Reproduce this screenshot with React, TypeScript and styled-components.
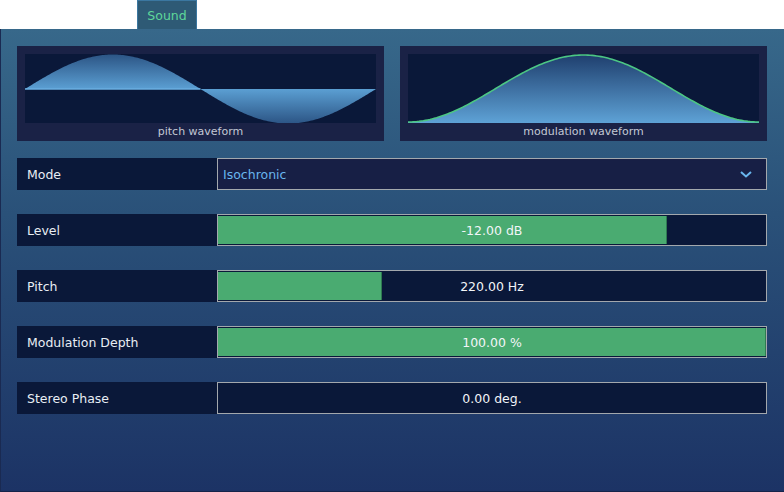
import React from 'react';
import styled, { createGlobalStyle } from 'styled-components';

const GlobalStyle = createGlobalStyle`
    html, body {
        margin: 0;
        padding: 0;
        background: #ffffff;
    }
    body {
        font-family: "DejaVu Sans", Verdana, sans-serif;
        width: 784px;
        height: 492px;
        overflow: hidden;
    }
`;

const Page = styled.div`
    width: 784px;
    height: 492px;
    display: flex;
    flex-direction: column;
`;

const TabBar = styled.div`
    height: 29px;
    display: flex;
    padding-left: 137px;
    background: #ffffff;
`;

const Tab = styled.div`
    width: 60px;
    height: 29px;
    box-sizing: border-box;
    border: 1px solid #3b77a0;
    border-bottom: none;
    background: #2e5a75;
    color: #5ed79a;
    font-size: 12.5px;
    display: flex;
    align-items: center;
    justify-content: center;
`;

const Panel = styled.div`
    flex: 1;
    box-sizing: border-box;
    border-left: 1px solid #1a2a52;
    border-bottom: 1px solid #15244a;
    padding: 17px 17px 0 16px;
    background: linear-gradient(180deg, #37688a 0%, #2a5179 40%, #1c3365 100%);
    display: flex;
    flex-direction: column;
`;

const WaveRow = styled.div`
    display: flex;
    gap: 16px;
    margin-bottom: 17px;
`;

const WaveBox = styled.div`
    width: 367px;
    height: 95px;
    box-sizing: border-box;
    background: #1a2246;
    padding: 8px 8px 0 8px;
    display: flex;
    flex-direction: column;
`;

const Canvas = styled.div`
    height: 69px;
    background: #0a1839;
    svg {
        display: block;
    }
`;

const WaveLabel = styled.div`
    flex: 1;
    display: flex;
    align-items: center;
    justify-content: center;
    color: #c2c8d4;
    font-size: 11px;
    padding-bottom: 1px;
`;

const ParamList = styled.div`
    display: flex;
    flex-direction: column;
    gap: 24px;
`;

const ParamRow = styled.div`
    display: flex;
    height: 32px;
`;

const ParamLabel = styled.div`
    width: 200px;
    box-sizing: border-box;
    background: #0a1839;
    color: #e8eef4;
    font-size: 12.5px;
    padding-left: 10px;
    display: flex;
    align-items: center;
`;

const Select = styled.div`
    flex: 1;
    box-sizing: border-box;
    border: 1px solid #a3a8ad;
    background: #171f45;
    color: #69b6ee;
    font-size: 12.5px;
    display: flex;
    align-items: center;
    justify-content: space-between;
    padding: 0 14px 0 5px;
`;

const Slider = styled.div`
    flex: 1;
    position: relative;
    box-sizing: border-box;
    border: 1px solid #a3a8ad;
    background: #0a1839;
    display: flex;
    align-items: center;
    justify-content: center;
`;

const Fill = styled.div`
    position: absolute;
    left: 0;
    top: 1px;
    bottom: 1px;
    box-sizing: border-box;
    background: #4aab71;
    border-right: 1px solid #2f7a52;
`;

const Value = styled.span`
    position: relative;
    color: #f2f5f8;
    font-size: 12.5px;
`;

const PitchWave: React.FC = () => {
    const w = 351;
    const h = 69;
    const mid = 35;
    const amp = 34.5;
    const pts: string[] = [];
    for (let i = 0; i <= 120; i++) {
        const x = (i / 120) * (w / 2);
        const y = mid - Math.sin((i / 120) * Math.PI) * amp;
        pts.push(`${x.toFixed(2)},${y.toFixed(2)}`);
    }
    const pts2: string[] = [];
    for (let i = 0; i <= 120; i++) {
        const x = w / 2 + (i / 120) * (w / 2);
        const y = mid + Math.sin((i / 120) * Math.PI) * amp;
        pts2.push(`${x.toFixed(2)},${y.toFixed(2)}`);
    }
    return (
        <svg width={w} height={h} viewBox={`0 0 ${w} ${h}`}>
            <defs>
                <linearGradient id="upLobe" x1="0" y1="0" x2="0" y2="1">
                    <stop offset="0" stopColor="#2c5585" />
                    <stop offset="1" stopColor="#5b9fd3" />
                </linearGradient>
                <linearGradient id="downLobe" x1="0" y1="0" x2="0" y2="1">
                    <stop offset="0" stopColor="#5b9fd3" />
                    <stop offset="1" stopColor="#2c5585" />
                </linearGradient>
            </defs>
            <polygon points={`0,${mid} ${pts.join(' ')}`} fill="url(#upLobe)" />
            <polygon points={`${w / 2},${mid} ${pts2.join(' ')}`} fill="url(#downLobe)" />
            <line x1="0" y1={mid} x2={w / 2} y2={mid} stroke="#6aaee0" strokeWidth="1.5" />
        </svg>
    );
};

const ModWave: React.FC = () => {
    const w = 351;
    const h = 69;
    const pts: string[] = [];
    for (let i = 0; i <= 160; i++) {
        const t = i / 160;
        const x = t * w;
        const y = h - 1 - ((1 - Math.cos(t * 2 * Math.PI)) / 2) * (h - 2);
        pts.push(`${x.toFixed(2)},${y.toFixed(2)}`);
    }
    return (
        <svg width={w} height={h} viewBox={`0 0 ${w} ${h}`}>
            <defs>
                <linearGradient id="bell" x1="0" y1="0" x2="0" y2="1">
                    <stop offset="0" stopColor="#1f3f6e" />
                    <stop offset="1" stopColor="#5ea2d6" />
                </linearGradient>
            </defs>
            <polygon points={`0,${h} ${pts.join(' ')} ${w},${h}`} fill="url(#bell)" />
            <polyline points={pts.join(' ')} fill="none" stroke="#4cc684" strokeWidth="1.6" />
        </svg>
    );
};

const Chevron: React.FC = () => (
    <svg width="12" height="7" viewBox="0 0 12 7">
        <path d="M1 1 L6 5.5 L11 1" fill="none" stroke="#69b6ee" strokeWidth="2" />
    </svg>
);

const params = [
    { name: 'Level', value: '-12.00 dB', fill: 0.82 },
    { name: 'Pitch', value: '220.00 Hz', fill: 0.3 },
    { name: 'Modulation Depth', value: '100.00 %', fill: 1 },
    { name: 'Stereo Phase', value: '0.00 deg.', fill: 0 },
];

const App: React.FC = () => {
    return (
        <>
            <GlobalStyle />
            <Page>
                <TabBar>
                    <Tab>Sound</Tab>
                </TabBar>
                <Panel>
                    <WaveRow>
                        <WaveBox>
                            <Canvas><PitchWave /></Canvas>
                            <WaveLabel>pitch waveform</WaveLabel>
                        </WaveBox>
                        <WaveBox>
                            <Canvas><ModWave /></Canvas>
                            <WaveLabel>modulation waveform</WaveLabel>
                        </WaveBox>
                    </WaveRow>
                    <ParamList>
                        <ParamRow>
                            <ParamLabel>Mode</ParamLabel>
                            <Select>
                                <span>Isochronic</span>
                                <Chevron />
                            </Select>
                        </ParamRow>
                        {params.map(p => (
                            <ParamRow key={p.name}>
                                <ParamLabel>{p.name}</ParamLabel>
                                <Slider>
                                    {p.fill > 0 && (
                                        <Fill style={{ width: `${p.fill * 100}%` }} />
                                    )}
                                    <Value>{p.value}</Value>
                                </Slider>
                            </ParamRow>
                        ))}
                    </ParamList>
                </Panel>
            </Page>
        </>
    );
};

export default App;
